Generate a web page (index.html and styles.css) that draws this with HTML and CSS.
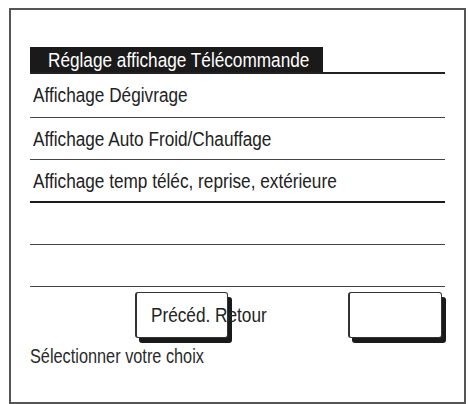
FILE: index.html
```html
<!DOCTYPE html>
<html lang="fr">
<head>
<meta charset="utf-8">
<link rel="stylesheet" href="styles.css">
</head>
<body>
<div class="frame">
  <div class="menu">
    <div class="row head"><span class="title"><span class="t">Réglage affichage Télécommande</span></span></div>
    <div class="row first"><span class="t">Affichage Dégivrage</span></div>
    <div class="row"><span class="t">Affichage Auto Froid/Chauffage</span></div>
    <div class="row thick"><span class="t">Affichage temp téléc, reprise, extérieure</span></div>
    <div class="row"></div>
    <div class="row"></div>
  </div>
  <div class="buttons">
    <div class="btn btn-left"><span class="btn-label"><span class="t">Précéd. Retour</span></span></div>
    <div class="btn btn-right"></div>
  </div>
  <div class="status"><span class="t ts">Sélectionner votre choix</span></div>
</div>
</body>
</html>
```
FILE: styles.css
```css
html, body {
  margin: 0;
  padding: 0;
  background: #ffffff;
}
body {
  font-family: "Liberation Sans", Arial, sans-serif;
  color: #222222;
}
.t {
  display: inline-block;
  white-space: nowrap;
  transform-origin: 0 0;
  transform: scaleX(0.86);
}
.ts {
  transform: scaleX(0.815);
}
.frame {
  box-sizing: border-box;
  margin: 8px 0 0 9px;
  width: 457px;
  height: 396px;
  border: 2px solid #555555;
  padding: 37px 19px 0 19px;
}
.menu {
  display: flex;
  flex-direction: column;
}
.row {
  box-sizing: border-box;
  height: 42px;
  border-bottom: 1px solid #444444;
  padding: 10px 0 0 3px;
  font-size: 20px;
  line-height: 22px;
  white-space: nowrap;
}
.row.first {
  height: 44px;
}
.row.head {
  height: 27px;
  padding: 0;
  border-bottom: 2px solid #222222;
}
.row.thick {
  height: 43px;
  border-bottom: 2px solid #1a1a1a;
}
.title {
  display: block;
  box-sizing: border-box;
  width: 293px;
  height: 25px;
  background: #1a1a1a;
  color: #ffffff;
  padding: 2px 0 0 18px;
  font-size: 20px;
  line-height: 22px;
  overflow: hidden;
}
.buttons {
  display: flex;
  padding: 5px 0 0 105px;
  gap: 120px;
}
.btn {
  box-sizing: border-box;
  width: 93px;
  height: 46px;
  border: 1px solid #333333;
  border-left-width: 2px;
  border-radius: 3px;
  box-shadow: 4px 5px 0 #1a1a1a;
  background: #ffffff;
}
.btn-right {
  width: 94px;
}
.btn-label {
  display: block;
  padding: 11px 0 0 14px;
  font-size: 20px;
  line-height: 22px;
  white-space: nowrap;
}
.status {
  padding: 7px 0 0 0;
  font-size: 20px;
  line-height: 22px;
  color: #2a2a2a;
}
```
